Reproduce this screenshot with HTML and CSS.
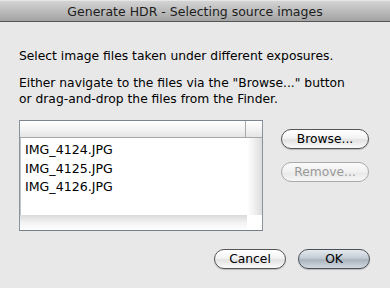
FILE: index.html
```html
<!DOCTYPE html>
<html lang="en">
<head>
    <meta charset="UTF-8">
    <title>Generate HDR - Selecting source images</title>
    <link rel="stylesheet" href="styles.css">
</head>
<body>
    <div class="dialog">
        <div class="titlebar">Generate HDR - Selecting source images</div>

        <div class="content">
            <p class="intro">Select image files taken under different exposures.</p>
            <p class="hint">Either navigate to the files via the "Browse..." button<br>or drag-and-drop the files from the Finder.</p>

            <div class="files-row">
                <div class="file-list">
                    <div class="list-header">
                        <span class="header-cell"></span>
                        <span class="header-corner"></span>
                    </div>
                    <div class="list-body">
                        <ul class="list-items">
                            <li>IMG_4124.JPG</li>
                            <li>IMG_4125.JPG</li>
                            <li>IMG_4126.JPG</li>
                        </ul>
                        <div class="vscroll"></div>
                    </div>
                    <div class="list-footer">
                        <span class="hscroll"></span>
                        <span class="scroll-corner"></span>
                    </div>
                </div>

                <div class="side-buttons">
                    <button class="btn">Browse...</button>
                    <button class="btn" disabled>Remove...</button>
                </div>
            </div>

            <div class="actions">
                <button class="btn btn-wide">Cancel</button>
                <button class="btn btn-wide btn-default">OK</button>
            </div>
        </div>
    </div>
</body>
</html>
```

FILE: styles.css
```css
* {
    box-sizing: border-box;
    margin: 0;
    padding: 0;
}

body {
    width: 390px;
    height: 288px;
    overflow: hidden;
    background: #e8e8e8;
    font-family: 'DejaVu Sans', sans-serif;
    font-size: 12.3px;
    color: #000;
}

.dialog {
    height: 288px;
    background: #e8e8e8;
}

.titlebar {
    height: 22px;
    line-height: 21px;
    text-align: center;
    font-size: 12.5px;
    color: #1c1c1c;
    background: linear-gradient(#d4d4d4, #a3a3a3);
    border-top: 1px solid #e6e6e6;
    border-bottom: 1px solid #555;
}

.content {
    padding: 0 19px;
}

.intro {
    margin-top: 26px;
    line-height: 16px;
}

.hint {
    margin-top: 11px;
    line-height: 16px;
}

.files-row {
    display: flex;
    margin-top: 13px;
}

.file-list {
    width: 244px;
    height: 111px;
    border: 1px solid #8a929c;
    border-top-color: #7c848e;
    border-bottom-color: #767e88;
    background: #fff;
    display: flex;
    flex-direction: column;
    box-shadow: inset 1px 1px 0 #c2c6cc;
}

.list-header {
    display: flex;
    height: 17px;
    border-bottom: 1px solid #a8a8a8;
    background: linear-gradient(#fff, #f1f1f1 60%, #e4e4e4);
}

.header-cell {
    flex: 1;
    border-right: 1px solid #a8a8a8;
}

.header-corner {
    width: 16px;
}

.list-body {
    flex: 1;
    display: flex;
}

.list-items {
    flex: 1;
    list-style: none;
    padding: 3px 0 0 5px;
    font-size: 12.6px;
}

.list-items li {
    height: 18.5px;
    line-height: 18px;
}

.vscroll {
    width: 15px;
    background: linear-gradient(to right, #fff, #f3f3f3 40%, #dcdcdc);
}

.list-footer {
    display: flex;
    height: 15px;
}

.hscroll {
    flex: 1;
    background: linear-gradient(#dadada, #f2f2f2 50%, #fff);
}

.scroll-corner {
    width: 15px;
    background: #fff;
}

.side-buttons {
    display: flex;
    flex-direction: column;
    gap: 13px;
    margin-left: 18px;
    padding-top: 9px;
}

.btn {
    height: 20px;
    width: 88px;
    border: 1px solid #555;
    border-radius: 10px;
    background: linear-gradient(#fff, #f3f3f3 45%, #e2e2e2 55%, #fafafa);
    font-family: 'DejaVu Sans', sans-serif;
    font-size: 12.3px;
    color: #000;
    line-height: 17px;
    box-shadow: 0 1px 1px rgba(0, 0, 0, 0.2);
}

.btn:disabled {
    color: #999;
    border-color: #aaa;
    box-shadow: none;
    background: linear-gradient(#fafafa, #f1f1f1 50%, #e9e9e9 55%, #f6f6f6);
}

.actions {
    display: flex;
    justify-content: flex-end;
    gap: 12px;
    margin-top: 18px;
    padding-right: 1px;
}

.btn-wide {
    width: 72px;
}

.btn-default {
    border-color: #4a5058;
    background: linear-gradient(#e4e9ee, #c3ccd4 45%, #aab4be 55%, #d2d9e0);
}
```
